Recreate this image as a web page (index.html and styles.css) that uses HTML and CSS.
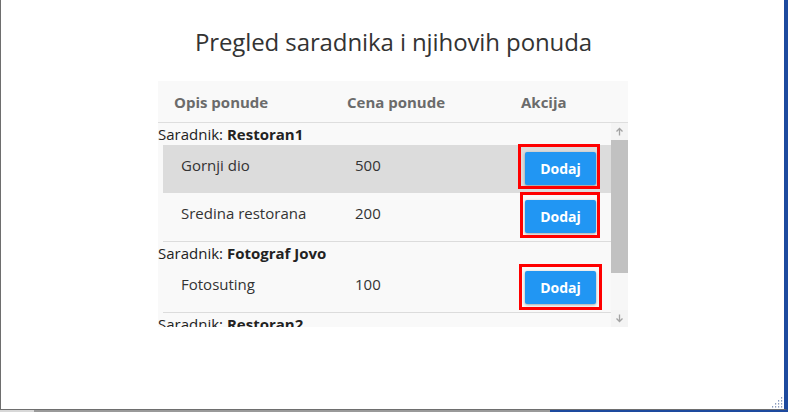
FILE: index.html
```html
<!DOCTYPE html>
<html>
<head>
<meta charset="utf-8">
<link rel="stylesheet" href="styles.css">
</head>
<body>
<div class="screen">
  <div class="window">
    <h1 class="title">Pregled saradnika i njihovih ponuda</h1>
    <div class="panel">
      <div class="thead">
        <div class="th c1">Opis ponude</div>
        <div class="th c2">Cena ponude</div>
        <div class="th c3">Akcija</div>
      </div>
      <div class="tbody">
        <div class="content">
          <div class="group">Saradnik: <b>Restoran1</b></div>
          <div class="row active">
            <div class="cell name">Gornji dio</div>
            <div class="cell price">500</div>
            <div class="cell action"><button class="btn">Dodaj</button><span class="mark m1"></span></div>
          </div>
          <div class="row">
            <div class="cell name">Sredina restorana</div>
            <div class="cell price">200</div>
            <div class="cell action"><button class="btn">Dodaj</button><span class="mark m2"></span></div>
          </div>
          <div class="group">Saradnik: <b>Fotograf Jovo</b></div>
          <div class="row">
            <div class="cell name">Fotosuting</div>
            <div class="cell price">100</div>
            <div class="cell action"><button class="btn">Dodaj</button><span class="mark m3"></span></div>
          </div>
          <div class="group last">Saradnik: <b>Restoran2</b></div>
        </div>
        <div class="scrollbar">
          <div class="sb-btn">
            <svg width="9" height="9" viewBox="0 0 9 9"><path d="M4.5 1.5 L4.5 8.5 M1.5 4.5 L4.5 1.5 L7.5 4.5" stroke="#a3a3a3" stroke-width="1.3" fill="none"/></svg>
          </div>
          <div class="sb-thumb"></div>
          <div class="sb-track"></div>
          <div class="sb-btn">
            <svg width="9" height="9" viewBox="0 0 9 9"><path d="M4.5 0.5 L4.5 7.5 M1.5 4.5 L4.5 7.5 L7.5 4.5" stroke="#a3a3a3" stroke-width="1.3" fill="none"/></svg>
          </div>
        </div>
      </div>
    </div>
    <svg class="grip" width="12" height="12" viewBox="0 0 12 12">
      <g fill="#8a9bbd">
        <rect x="10" y="1" width="1.2" height="1.6"/>
        <rect x="7" y="4" width="1.2" height="1.6"/><rect x="10" y="4" width="1.2" height="1.6"/>
        <rect x="4" y="7" width="1.2" height="1.6"/><rect x="7" y="7" width="1.2" height="1.6"/><rect x="10" y="7" width="1.2" height="1.6"/>
        <rect x="1" y="10" width="1.2" height="1.6"/><rect x="4" y="10" width="1.2" height="1.6"/><rect x="7" y="10" width="1.2" height="1.6"/><rect x="10" y="10" width="1.2" height="1.6"/>
      </g>
    </svg>
  </div>
  <div class="taskbar">
    <div class="tb-left"></div>
    <div class="tb-mid"></div>
    <div class="tb-right"></div>
  </div>
</div>
</body>
</html>
```

FILE: styles.css
```css
* { box-sizing: border-box; }
html, body { margin: 0; padding: 0; background: #ffffff; }
body {
  font-family: "Open Sans", "Noto Sans", sans-serif;
  color: #222;
  overflow: hidden;
}
.screen { width: 788px; height: 412px; display: flex; flex-direction: column; }
.window {
  position: relative;
  height: 410px;
  background: #fff;
  border-left: 1px solid #6e6e6e;
  border-right: 4px solid #1d4a9e;
  border-bottom: 1px solid #6e6e6e;
  display: flex;
  flex-direction: column;
  align-items: center;
}
.title {
  margin: 25px 0 0 2px;
  font-weight: 400;
  font-size: 24px;
  line-height: 34px;
  color: #333;
  letter-spacing: -0.1px;
}
.panel {
  margin-top: 22px;
  margin-left: 1px;
  width: 470px;
  height: 246px;
  background: #f9f9f9;
  display: flex;
  flex-direction: column;
}
.thead {
  display: flex;
  height: 42px;
  border-bottom: 1px solid #dedede;
  align-items: center;
  font-weight: 700;
  font-size: 15px;
  color: #6b6b6b;
}
.th { padding-left: 16px; }
.c1 { width: 173px; }
.c2 { width: 174px; }
.c3 { flex: 1; }
.tbody { display: flex; flex: 1; overflow: hidden; }
.content { width: 453px; overflow: hidden; font-size: 15px; }
.group { height: 22px; line-height: 22px; color: #222; }
.group.last { height: 14px; line-height: 22px; overflow: hidden; }
.group b { font-weight: 700; }
.row {
  margin-left: 5px;
  height: 49px;
  display: flex;
  border-bottom: 1px solid #dcdcdc;
  color: #333;
}
.row.active { background: #dcdcdc; border-bottom-color: #dcdcdc; height: 48px; }
.cell { line-height: 20px; padding-top: 10px; }
.name { width: 192px; padding-left: 18px; }
.price { width: 170px; }
.action { position: relative; padding-top: 7px; }
.btn {
  width: 71px;
  height: 33px;
  border: none;
  border-radius: 2px;
  background: #2196f3;
  color: #fff;
  font-family: "Open Sans", "Noto Sans", sans-serif;
  font-weight: 700;
  font-size: 14px;
  box-shadow: 0 1px 3px rgba(0,0,0,0.35);
  padding: 0;
}
.mark {
  position: absolute;
  border: 3px solid #ff0000;
  pointer-events: none;
}
.m1 { left: -7px; top: -1px; width: 82px; height: 45px; }
.m2 { left: -5px; top: -1px; width: 80px; height: 46px; }
.m3 { left: -6px; top: 0px; width: 83px; height: 46px; }
.scrollbar { width: 17px; display: flex; flex-direction: column; background: #f9f9f9; }
.sb-btn { height: 17px; display: flex; align-items: center; justify-content: center; background: #f4f4f4; }
.sb-thumb { height: 133px; background: #c1c1c1; }
.sb-track { flex: 1; background: #f7f7f7; }
.grip { position: absolute; right: 1px; bottom: 1px; }
.taskbar { display: flex; height: 2px; }
.tb-left { width: 34px; background: #d8d8d8; }
.tb-mid { width: 516px; background: #9a9a9a; }
.tb-right { flex: 1; background: #1d4a9e; }
```
